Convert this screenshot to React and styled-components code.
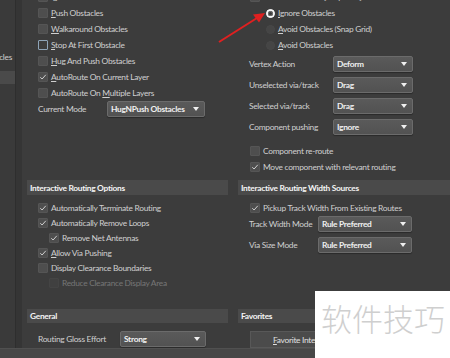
import React from "react";
import styled, { createGlobalStyle } from "styled-components";

const Global = createGlobalStyle`
  html, body { margin: 0; padding: 0; background: #3c3c3c; }
  body { font-family: Lato, "Open Sans", sans-serif; }
  * { box-sizing: border-box; }
`;

const Page = styled.div`
  width: 450px;
  height: 358px;
  overflow: hidden;
  position: relative;
  display: flex;
  flex-direction: column;
  background: #3c3c3c;
  color: #d0d0d0;
  font-family: Lato, "Open Sans", sans-serif;
  font-size: 8.4px;
  letter-spacing: -0.3px;
`;

const Body = styled.div`
  height: 348px;
  display: flex;
`;

const Sidebar = styled.div`
  width: 15px;
  background: #3a3a3a;
  padding-top: 51px;
  display: flex;
  flex-direction: column;
  overflow: hidden;
`;

const SidebarItem = styled.div`
  height: ${(p) => p.h}px;
  margin-top: ${(p) => p.mt || 0}px;
  line-height: ${(p) => p.h}px;
  white-space: nowrap;
  direction: rtl;
  text-align: left;
  padding-right: 3px;
  background: ${(p) => (p.selected ? "#4a4a4a" : "transparent")};
  color: #cfcfcf;
`;

const Divider = styled.div`
  width: 7px;
  background: #353535;
  border-left: 1px solid #2e2e2e;
`;

const Main = styled.div`
  flex: 1;
  display: flex;
  flex-direction: column;
  padding-left: 5px;
  overflow: hidden;
`;

const Band = styled.div`
  display: grid;
  grid-template-columns: 201px 1fr;
  column-gap: 10px;
  height: ${(p) => p.h}px;
  margin-top: ${(p) => p.mt || 0}px;
  flex-shrink: 0;
`;

const Column = styled.div`
  display: flex;
  flex-direction: column;
  padding-top: ${(p) => p.pt || 0}px;
`;

const Row = styled.div`
  display: flex;
  align-items: center;
  height: ${(p) => p.h || 16}px;
  margin-top: ${(p) => p.mt || 0}px;
  padding-left: ${(p) => p.indent || 0}px;
  gap: ${(p) => (p.gap === undefined ? 3 : p.gap)}px;
  white-space: nowrap;
  color: ${(p) => (p.disabled ? "#767676" : "#d0d0d0")};
`;

const Box = styled.span`
  width: 10px;
  height: 10px;
  flex-shrink: 0;
  border-radius: 1px;
  background: ${(p) =>
    p.focused ? "#3c3c3c" : p.disabled ? "#404040" : "#4e4e4e"};
  border: 1px solid
    ${(p) => (p.focused ? "#8ea4b8" : p.disabled ? "#444" : "#555")};
  display: flex;
  align-items: center;
  justify-content: center;
`;

const Check = () => (
  <svg width="8" height="8" viewBox="0 0 8 8">
    <path d="M1.3 4.2 L3.1 6 L6.8 1.8" fill="none" stroke="#cfcfcf" strokeWidth="1" />
  </svg>
);

const CheckBox = ({ checked, focused, disabled }) => (
  <Box focused={focused} disabled={disabled}>
    {checked && <Check />}
  </Box>
);

const RadioDot = styled.span`
  width: 9px;
  height: 9px;
  flex-shrink: 0;
  border-radius: 50%;
  background: ${(p) => (p.on ? "#f2f2f2" : "#454545")};
  border: 1px solid ${(p) => (p.on ? "#ffffff" : "#484848")};
  display: flex;
  align-items: center;
  justify-content: center;
  &::after {
    content: "";
    display: ${(p) => (p.on ? "block" : "none")};
    width: 5px;
    height: 5px;
    border-radius: 50%;
    background: #3a3a3a;
    box-shadow: inset 0 0 0 1px #6f6f6f;
  }
`;

const U = styled.span`
  text-decoration: underline;
  text-underline-offset: 1px;
`;

const Label = styled.span`
  width: ${(p) => p.w}px;
  flex-shrink: 0;
  color: #d0d0d0;
`;

const SelectBox = styled.div`
  width: ${(p) => p.w}px;
  height: 16px;
  flex-shrink: 0;
  background: linear-gradient(#5a5a5a, #525252);
  border: 1px solid #6b6b6b;
  border-radius: 2px;
  display: flex;
  align-items: center;
  justify-content: space-between;
  padding: 0 5px 0 3px;
  color: #f0f0f0;
  font-weight: 700;
  box-shadow: 0 1px 1px rgba(0, 0, 0, 0.3);
  &::after {
    content: "";
    border-left: 3.5px solid transparent;
    border-right: 3.5px solid transparent;
    border-top: 4px solid #f0f0f0;
  }
`;

const Field = ({ label, lw, w, value, mt, indent = 11 }) => (
  <Row mt={mt} indent={indent} gap={0}>
    <Label w={lw}>{label}</Label>
    <SelectBox w={w}>{value}</SelectBox>
  </Row>
);

const Header = styled.div`
  height: ${(p) => p.h || 15}px;
  background: #4a4a4a;
  color: #f4f4f4;
  font-weight: 700;
  display: flex;
  align-items: center;
  padding-left: 3px;
  white-space: nowrap;
`;

const Button = styled.div`
  width: 120px;
  height: 17px;
  margin-left: 12px;
  margin-top: 8px;
  background: #4b4b4b;
  border: 1px solid #585858;
  display: flex;
  align-items: center;
  padding-left: 22px;
  white-space: nowrap;
  color: #e0e0e0;
`;

const BottomBar = styled.div`
  height: 10px;
  background: #474747;
  border-top: 1px solid #505050;
`;

const Overlay = styled.div`
  position: absolute;
  left: 315px;
  top: 291px;
  width: 135px;
  height: 67px;
  background: #ffffff;
  display: flex;
  align-items: center;
  padding-left: 6px;
  font-family: "Noto Sans CJK SC", sans-serif;
  font-weight: 300;
  font-size: 31px;
  letter-spacing: 0;
  color: #cfcfcf;
  padding-bottom: 14px;
`;

const ArrowSvg = styled.svg`
  position: absolute;
  left: 215px;
  top: 8px;
`;

export default function App() {
  return (
    <Page>
      <Global />
      <Body>
        <Sidebar>
          <SidebarItem h={12}>Obstacles</SidebarItem>
          <SidebarItem h={13} mt={8} selected />
        </Sidebar>
        <Divider />
        <Main>
          <Band h={191} mt={-11}>
            <Column>
              <Row indent={11}>
                <CheckBox />
                <span>Ignore Obstacles</span>
              </Row>
              <Row indent={11}>
                <CheckBox />
                <span><U>P</U>ush Obstacles</span>
              </Row>
              <Row indent={11}>
                <CheckBox />
                <span><U>W</U>alkaround Obstacles</span>
              </Row>
              <Row indent={11}>
                <CheckBox focused />
                <span><U>S</U>top At First Obstacle</span>
              </Row>
              <Row indent={11}>
                <CheckBox />
                <span><U>H</U>ug And Push Obstacles</span>
              </Row>
              <Row indent={11}>
                <CheckBox checked />
                <span><U>A</U>utoRoute On Current Layer</span>
              </Row>
              <Row indent={11}>
                <CheckBox />
                <span>AutoRoute On <U>M</U>ultiple Layers</span>
              </Row>
              <Field label="Current Mode" lw={69} w={98} value="HugNPush Obstacles" />
            </Column>
            <Column>
              <Row indent={12}>
                <CheckBox />
                <span>Restrict To 90/45 [Snap Grid]</span>
              </Row>
              <Row indent={28}>
                <RadioDot on />
                <span><U>I</U>gnore Obstacles</span>
              </Row>
              <Row indent={28}>
                <RadioDot />
                <span><U>A</U>void Obstacles (Snap Grid)</span>
              </Row>
              <Row indent={28}>
                <RadioDot />
                <span><U>A</U>void Obstacles</span>
              </Row>
              <Field mt={3} label="Vertex Action" lw={84} w={80} value="Deform" />
              <Field mt={5} label="Unselected via/track" lw={84} w={80} value="Drag" />
              <Field mt={5} label="Selected via/track" lw={84} w={80} value="Drag" />
              <Field mt={5} label="Component pushing" lw={84} w={80} value="Ignore" />
              <Row indent={12} mt={8}>
                <CheckBox />
                <span>Component re-route</span>
              </Row>
              <Row indent={12}>
                <CheckBox checked />
                <span>Move component with relevant routing</span>
              </Row>
            </Column>
          </Band>

          <Band h={129}>
            <Column>
              <Header>Interactive Routing Options</Header>
              <Column pt={5}>
                <Row h={15} indent={11}>
                  <CheckBox checked />
                  <span>Automatically Terminate Routing</span>
                </Row>
                <Row h={15} indent={11}>
                  <CheckBox checked />
                  <span>Automatically Remove Loops</span>
                </Row>
                <Row h={15} indent={22}>
                  <CheckBox checked />
                  <span>Remove Net Antennas</span>
                </Row>
                <Row h={15} indent={11}>
                  <CheckBox checked />
                  <span><U>A</U>llow Via Pushing</span>
                </Row>
                <Row h={15} indent={11}>
                  <CheckBox />
                  <span>Display Clearance Boundaries</span>
                </Row>
                <Row h={15} indent={22} disabled>
                  <CheckBox disabled />
                  <span>Reduce Clearance Display Area</span>
                </Row>
              </Column>
            </Column>
            <Column>
              <Header>Interactive Routing Width Sources</Header>
              <Column pt={5}>
                <Row h={15} indent={12}>
                  <CheckBox checked />
                  <span>Pickup Track Width From Existing Routes</span>
                </Row>
                <Field mt={1} label="Track Width Mode" lw={69} w={94} value="Rule Preferred" />
                <Field mt={5} label="Via Size Mode" lw={69} w={94} value="Rule Preferred" />
              </Column>
            </Column>
          </Band>

          <Band h={39}>
            <Column>
              <Header h={14}>General</Header>
              <Field mt={8} label="Routing Gloss Effort" lw={82} w={86} value="Strong" />
            </Column>
            <Column>
              <Header h={14}>Favorites</Header>
              <Button>
                <span><U>F</U>avorite Interactive Routing</span>
              </Button>
            </Column>
          </Band>
        </Main>
      </Body>
      <BottomBar />

      <ArrowSvg width="60" height="40" viewBox="0 0 60 40">
        <line x1="4" y1="34" x2="42" y2="10" stroke="#e02020" strokeWidth="2" />
        <path d="M50 5 L38 6.5 L44 14.5 Z" fill="#e02020" />
      </ArrowSvg>

      <Overlay>软件技巧</Overlay>
    </Page>
  );
}
